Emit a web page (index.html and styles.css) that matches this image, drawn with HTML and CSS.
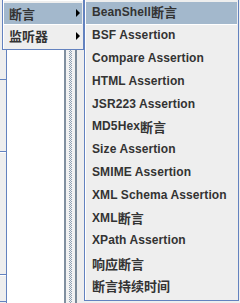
FILE: index.html
```html
<html lang="zh">
<head>
  <meta charset="UTF-8">
  <title>断言菜单</title>
  <link rel="stylesheet" href="styles.css">
</head>
<body>

  <div class="desk">
    <div class="strip">
      <div class="seg s1"></div>
      <div class="seg s2"></div>
      <div class="seg s3"></div>
      <div class="seg s4"></div>
    </div>
    <div class="tree"></div>
    <div class="scroll">
      <div class="track"><div class="dots"></div></div>
      <div class="thumb"></div>
    </div>
    <div class="rest"></div>
  </div>

  <div class="menu main">
    <div class="item sel"><span class="cjk">断言</span><i class="arrow"></i></div>
    <div class="item"><span class="cjk">监听器</span><i class="arrow"></i></div>
  </div>

  <div class="menu sub">
    <div class="item sel">BeanShell<span class="cjk">断言</span></div>
    <div class="item">BSF Assertion</div>
    <div class="item">Compare Assertion</div>
    <div class="item">HTML Assertion</div>
    <div class="item">JSR223 Assertion</div>
    <div class="item">MD5Hex<span class="cjk">断言</span></div>
    <div class="item">Size Assertion</div>
    <div class="item">SMIME Assertion</div>
    <div class="item">XML Schema Assertion</div>
    <div class="item">XML<span class="cjk">断言</span></div>
    <div class="item">XPath Assertion</div>
    <div class="item"><span class="cjk">响应断言</span></div>
    <div class="item"><span class="cjk">断言持续时间</span></div>
  </div>

</body>
</html>
```

FILE: styles.css
```css
body {
  margin: 0;
  width: 240px;
  height: 303px;
  overflow: hidden;
  position: relative;
  background: #eeeeee;
  font-family: "Liberation Sans", "Noto Sans CJK SC", sans-serif;
  font-weight: bold;
  font-size: 12px;
  color: #333333;
}
.desk {
  display: flex;
  height: 303px;
}
.strip {
  width: 6px;
  border-right: 1px solid #6382bf;
  display: flex;
  flex-direction: column;
}
.seg {
  border-bottom: 1px solid #6382bf;
}
.s1 { height: 79px; }
.s2 { height: 71px; }
.s3 { height: 121px; border-top: 1px solid #fff; }
.s4 { height: 25px; border-top: 1px solid #fff; }
.tree {
  width: 57px;
  background: #ffffff;
}
.scroll {
  display: flex;
  border-left: 2px solid #8190a0;
}
.track {
  width: 9px;
  background: #f2f2f2;
  display: flex;
  justify-content: center;
}
.dots {
  width: 3px;
  background: repeating-conic-gradient(#8da0b3 0 25%, #f2f2f2 0 50%) 0 0 / 2px 2px;
}
.thumb {
  width: 2px;
  background: #7a8a99;
}
.rest {
  flex: 1;
}
.menu {
  position: absolute;
  background: #eeeeee;
  border: 1px solid #6382bf;
  box-shadow: inset 1px 1px 0 #ffffff;
  box-sizing: border-box;
}
.main {
  left: 2px;
  top: -1px;
  width: 82px;
  padding: 3px 1px 2px 1px;
}
.sub {
  left: 84px;
  top: -2px;
  width: 155px;
  height: 303px;
  padding: 3px 1px 0 1px;
}
.item {
  display: flex;
  align-items: center;
  justify-content: space-between;
  box-sizing: border-box;
}
.main .item {
  height: 22px;
  padding: 0 2px 1px 5px;
}
.sub .item {
  height: 22.8px;
  padding: 0 0 2px 6px;
  justify-content: flex-start;
  letter-spacing: 0.1px;
}
.item.sel {
  background: #a3b8cc;
  border-bottom: 1px solid #ffffff;
}
.cjk {
  font-size: 13px;
  letter-spacing: 0;
  font-family: "Noto Sans CJK SC", sans-serif;
}
.arrow {
  width: 0;
  height: 0;
  border-top: 4px solid transparent;
  border-bottom: 4px solid transparent;
  border-left: 4px solid #000000;
}
```
